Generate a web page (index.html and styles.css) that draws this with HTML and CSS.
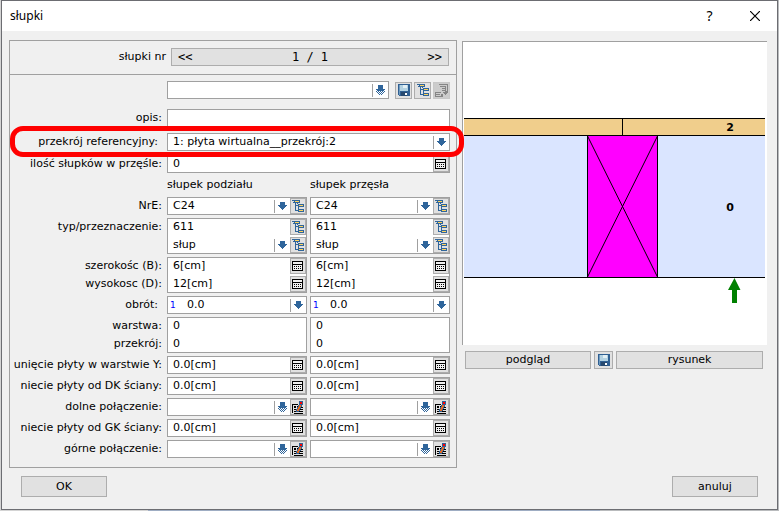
FILE: index.html
```html
<!DOCTYPE html>
<html lang="pl">
<head>
<meta charset="utf-8">
<title>słupki</title>
<link rel="stylesheet" href="styles.css">
</head>
<body>
<svg class="sprite" aria-hidden="true">
  <symbol id="arrow" viewBox="0 0 9 8"><path d="M2 0h5v3h2v1h-1v1h-1v1h-1v1h-1v1h-1v-1h-1v-1h-1v-1h-1v-1h-1v-1h2z" fill="#2f659b"/></symbol>
  <symbol id="arrow-dots" viewBox="0 0 9 10"><path d="M2 0h5v4h2v1H0V4h2zM1 5h1v1H1zM3 5h1v1H3zM5 5h1v1H5zM7 5h1v1H7zM2 5h5v1H2zM2 6h1v1H2zM4 6h1v1H4zM6 6h1v1H6zM0 6h1v1H0zM8 6h1v1H8zM3 7h1v1H3zM5 7h1v1H5zM1 7h1v1H1zM7 7h1v1H7zM4 8h1v1H4zM2 8h1v1H2zM6 8h1v1H6zM3 9h1v1H3zM5 9h1v1H5z" fill="#2f659b"/></symbol>
  <symbol id="calc" viewBox="0 0 12 12"><path d="M0 1h11v10H0z"/><path d="M1 2h9v2H1zM1 5h9v5H1z" fill="#f0f0f0"/><path d="M2 6h1v1H2zM4 6h1v1H4zM6 6h1v1H6zM8 6h1v1H8zM2 8h1v1H2zM4 8h1v1H4zM6 8h1v1H6zM8 8h1v1H8z"/></symbol>
  <symbol id="tree" viewBox="0 0 12 12"><path d="M0 0h8v3H6v1h6v3H7v2h5v3H6v-1H3V3H0zM4 3v2h2V4H5V3zM4 6v4h2V6z" fill="#2f659b" fill-rule="evenodd"/><path d="M3 1h4v1H3zM7 5h4v1H7zM7 10h4v1H7z" fill="#ffd35a"/><path d="M0 1h1v2H0zM1 1h1v1H1z" fill="#e1e1e1"/></symbol>
  <symbol id="tree-off" viewBox="0 0 14 14"><path d="M4 1h9v9h-1v1h-1v1h-1v-1H9v-1H8V9h2V6H7V5h3V4H5V3h6v5h1V2H4zM0 9h6v1H1v1h4v1H1v1h5v-2h2v3H0zM7 7h3v1H7z" fill="#858585" fill-rule="evenodd"/></symbol>
  <symbol id="disk" viewBox="0 0 12 12"><path d="M0 0h12v12H1L0 11z" fill="#2f5f92"/><path d="M2 1h8v6H2z" fill="#b3d2e2"/><path d="M5 1h4v3H5z" fill="#e3f0f5"/><path d="M1 1h1v10H1z" fill="#6f9bc0"/><path d="M3 8h6v4H3z" fill="#26486e"/><path d="M7 9h2v2H7z" fill="#fff"/></symbol>
  <symbol id="edit" viewBox="0 0 12 13"><path d="M0 3h6v1H1v8H0zM2 5h2v2H2zM5 5h1v1H5zM2 8h3v1H2zM2 10h2v1H2zM7 10h4v1H7zM8 8h3v1H8zM9 6h2v1H9zM2 12h9v1H2z"/><path d="M7 0h4v4h-1v2H9v2H8v2H7v1H4V8h1V6h1V4h1z" fill="#2f5f92"/><path d="M7 4h2v2H8v2H7v2H5V8h1V6h1z" fill="#e66a20"/><path d="M8 1h2v2H8z" fill="#f00"/></symbol>
</svg>
<div class="dialog">
  <header class="titlebar">
    <h1>słupki</h1>
    <button class="title-btn" aria-label="Pomoc">?</button>
    <button class="title-btn" aria-label="Zamknij"><svg width="10" height="10" viewBox="0 0 10 10"><path d="M0 0L10 10M10 0L0 10" stroke="#000" stroke-width="1.2"/></svg></button>
  </header>
  <main>
    <section class="panel">
      <div class="nav-row">
        <span class="nav-label">słupki nr</span>
        <div class="nav"><button>&lt;&lt;</button><span>1 / 1</span><button>&gt;&gt;</button></div>
      </div>
      <form class="form" id="posts">
        <div class="presets wide">
          <div class="box"><div class="line"><select aria-label="szablon"><option></option></select><span class="drop"><svg width="9" height="10"><use href="#arrow-dots"/></svg></span></div></div>
          <button type="button" class="tool" aria-label="zapisz"><svg width="12" height="12"><use href="#disk"/></svg></button>
          <button type="button" class="tool" aria-label="drzewo"><svg width="12" height="12"><use href="#tree"/></svg></button>
          <button type="button" class="tool" aria-label="wstaw" disabled><svg width="14" height="14"><use href="#tree-off"/></svg></button>
        </div>

        <label class="label" for="opis">opis:</label>
        <div class="box wide opis"><div class="line"><input id="opis"></div></div>

        <div class="marked">
          <label class="label inset" for="ref">przekrój referencyjny:</label>
          <div class="box wide"><div class="line"><select id="ref"><option>1: płyta wirtualna__przekrój:2</option></select><span class="drop"><svg width="9" height="8"><use href="#arrow"/></svg></span></div></div>
          <span class="ring"></span>
        </div>

        <label class="label" for="ilosc">ilość słupków w przęśle:</label>
        <div class="box wide"><div class="line"><input id="ilosc" value="0"><button type="button" aria-label="kalkulator"><svg width="12" height="12"><use href="#calc"/></svg></button></div></div>

        <span class="head first">słupek podziału</span>
        <span class="head">słupek przęsła</span>

        <label class="label" for="nre">NrE:</label>
        <div class="box"><div class="line"><select id="nre"><option>C24</option></select><span class="drop"><svg width="9" height="8"><use href="#arrow"/></svg></span><button type="button" aria-label="drzewo"><svg width="12" height="12"><use href="#tree"/></svg></button></div></div>
        <div class="box"><div class="line"><select aria-label="NrE, przęsło"><option>C24</option></select><span class="drop"><svg width="9" height="8"><use href="#arrow"/></svg></span><button type="button" aria-label="drzewo"><svg width="12" height="12"><use href="#tree"/></svg></button></div></div>

        <label class="label" for="typ">typ/przeznaczenie:</label>
        <div class="box">
          <div class="line"><input id="typ" value="611"><button type="button" aria-label="drzewo"><svg width="12" height="12"><use href="#tree"/></svg></button></div>
          <div class="line"><select aria-label="przeznaczenie"><option>słup</option></select><span class="drop"><svg width="9" height="8"><use href="#arrow"/></svg></span><button type="button" aria-label="drzewo"><svg width="12" height="12"><use href="#tree"/></svg></button></div>
        </div>
        <div class="box">
          <div class="line"><input aria-label="typ, przęsło" value="611"><button type="button" aria-label="drzewo"><svg width="12" height="12"><use href="#tree"/></svg></button></div>
          <div class="line"><select aria-label="przeznaczenie, przęsło"><option>słup</option></select><span class="drop"><svg width="9" height="8"><use href="#arrow"/></svg></span><button type="button" aria-label="drzewo"><svg width="12" height="12"><use href="#tree"/></svg></button></div>
        </div>

        <div class="labels"><label class="label" for="szer">szerokośc (B):</label><label class="label" for="wys">wysokosc (D):</label></div>
        <div class="box">
          <div class="line"><input id="szer" value="6[cm]"><button type="button" aria-label="kalkulator"><svg width="12" height="12"><use href="#calc"/></svg></button></div>
          <div class="line"><input id="wys" value="12[cm]"><button type="button" aria-label="kalkulator"><svg width="12" height="12"><use href="#calc"/></svg></button></div>
        </div>
        <div class="box">
          <div class="line"><input aria-label="szerokość, przęsło" value="6[cm]"><button type="button" aria-label="kalkulator"><svg width="12" height="12"><use href="#calc"/></svg></button></div>
          <div class="line"><input aria-label="wysokość, przęsło" value="12[cm]"><button type="button" aria-label="kalkulator"><svg width="12" height="12"><use href="#calc"/></svg></button></div>
        </div>

        <label class="label inset" for="obrot">obrót:</label>
        <div class="box"><div class="line"><span class="index">1</span><select id="obrot"><option>0.0</option></select><span class="drop"><svg width="9" height="8"><use href="#arrow"/></svg></span></div></div>
        <div class="box"><div class="line"><span class="index">1</span><select aria-label="obrót, przęsło"><option>0.0</option></select><span class="drop"><svg width="9" height="8"><use href="#arrow"/></svg></span></div></div>

        <div class="labels"><label class="label" for="warstwa">warstwa:</label><label class="label" for="przekroj">przekrój:</label></div>
        <div class="box"><div class="line"><input id="warstwa" value="0"></div><div class="line"><input id="przekroj" value="0"></div></div>
        <div class="box"><div class="line"><input aria-label="warstwa, przęsło" value="0"></div><div class="line"><input aria-label="przekrój, przęsło" value="0"></div></div>

        <label class="label" for="py">unięcie płyty w warstwie Y:</label>
        <div class="box"><div class="line"><input id="py" value="0.0[cm]"><button type="button" aria-label="kalkulator"><svg width="12" height="12"><use href="#calc"/></svg></button></div></div>
        <div class="box"><div class="line"><input aria-label="warstwa Y, przęsło" value="0.0[cm]"><button type="button" aria-label="kalkulator"><svg width="12" height="12"><use href="#calc"/></svg></button></div></div>

        <label class="label" for="dk">niecie płyty od DK ściany:</label>
        <div class="box"><div class="line"><input id="dk" value="0.0[cm]"><button type="button" aria-label="kalkulator"><svg width="12" height="12"><use href="#calc"/></svg></button></div></div>
        <div class="box"><div class="line"><input aria-label="DK ściany, przęsło" value="0.0[cm]"><button type="button" aria-label="kalkulator"><svg width="12" height="12"><use href="#calc"/></svg></button></div></div>

        <label class="label" for="dolne">dolne połączenie:</label>
        <div class="box"><div class="line"><select id="dolne"><option></option></select><span class="drop"><svg width="9" height="10"><use href="#arrow-dots"/></svg></span><button type="button" aria-label="edytuj"><svg width="12" height="13"><use href="#edit"/></svg></button></div></div>
        <div class="box"><div class="line"><select aria-label="dolne połączenie, przęsło"><option></option></select><span class="drop"><svg width="9" height="10"><use href="#arrow-dots"/></svg></span><button type="button" aria-label="edytuj"><svg width="12" height="13"><use href="#edit"/></svg></button></div></div>

        <label class="label" for="gk">niecie płyty od GK ściany:</label>
        <div class="box"><div class="line"><input id="gk" value="0.0[cm]"><button type="button" aria-label="kalkulator"><svg width="12" height="12"><use href="#calc"/></svg></button></div></div>
        <div class="box"><div class="line"><input aria-label="GK ściany, przęsło" value="0.0[cm]"><button type="button" aria-label="kalkulator"><svg width="12" height="12"><use href="#calc"/></svg></button></div></div>

        <label class="label" for="gorne">górne połączenie:</label>
        <div class="box"><div class="line"><select id="gorne"><option></option></select><span class="drop"><svg width="9" height="10"><use href="#arrow-dots"/></svg></span><button type="button" aria-label="edytuj"><svg width="12" height="13"><use href="#edit"/></svg></button></div></div>
        <div class="box"><div class="line"><select aria-label="górne połączenie, przęsło"><option></option></select><span class="drop"><svg width="9" height="10"><use href="#arrow-dots"/></svg></span><button type="button" aria-label="edytuj"><svg width="12" height="13"><use href="#edit"/></svg></button></div></div>
      </form>
    </section>

    <section class="side">
      <div class="canvas">
        <svg viewBox="0 0 304 303" role="img" aria-label="przekrój ściany">
          <g shape-rendering="crispEdges">
            <path d="M1 76h301v17H1z" fill="#f0ce8c"/>
            <path d="M1 94h301v141H1z" fill="#dae5ff"/>
            <path d="M124 94h71v141h-71z" fill="#f0f"/>
            <path d="M1 76h301v1H1zM1 93h301v1H1zM1 235h301v1H1zM159 77h1v16h-1zM124 94h1v141h-1zM194 94h1v141h-1z"/>
          </g>
          <path d="M124.500 94L194.500 235M194.500 94L124.500 235" stroke="#000" fill="none"/>
          <path d="M271.500 236l6 12h-3.500v13h-5v-13h-4z" fill="#008000"/>
          <text x="267" y="89" text-anchor="middle">2</text>
          <text x="267" y="169" text-anchor="middle">0</text>
        </svg>
      </div>
      <div class="side-actions">
        <button class="btn preview">podgląd</button>
        <button class="btn save" aria-label="zapisz rysunek"><svg width="12" height="12"><use href="#disk"/></svg></button>
        <button class="btn draw">rysunek</button>
      </div>
    </section>
  </main>
  <footer>
    <button class="btn">OK</button>
    <button class="btn">anuluj</button>
  </footer>
</div>
</body>
</html>
```
FILE: styles.css
```css
* { box-sizing: border-box; }

body {
  margin: 0;
  min-height: 100vh;
  padding: 0 1px 1px;
  display: flex;
  background: linear-gradient(90deg, #d4d4d4 19%, #9fadc3 19%, #9fadc3 77%, #b9bbbd 77%);
  color: #000;
  font: 11px/16px "DejaVu Sans", Verdana, sans-serif;
}

button, input, select {
  margin: 0;
  padding: 0;
  border: 0;
  border-radius: 0;
  background: none;
  color: inherit;
  font: inherit;
  appearance: none;
}

svg { display: block; flex: none; }
use { shape-rendering: crispEdges; }
.sprite { position: absolute; width: 0; height: 0; }

.dialog {
  flex: 1;
  min-width: 0;
  border: 1px solid #6c6d72;
  background: #f0f0f0;
}

.titlebar {
  display: flex;
  align-items: center;
  height: 30px;
  padding-left: 8px;
  background: #fff;
  font: 12px/16px "Noto Sans", "Segoe UI", sans-serif;
}
.titlebar h1 { flex: 1; margin: 0; font: inherit; }
.title-btn {
  display: flex;
  align-items: center;
  justify-content: center;
  width: 45px;
  height: 30px;
  font-size: 14px;
}

main {
  display: grid;
  grid-template-columns: 448fr 305fr;
  gap: 5px;
  padding: 9px 10px 0 7px;
}

.panel { min-width: 0; border: 1px solid #a0a0a0; }

.nav-row {
  display: grid;
  grid-template-columns: 156px 1fr;
  gap: 5px;
  padding: 7px 7px 8px 0;
  border-bottom: 1px solid #a0a0a0;
}
.nav-label { text-align: right; line-height: 18px; }
.nav {
  display: flex;
  justify-content: space-between;
  padding: 0 6px;
  border: 1px solid #adadad;
  background: #e1e1e1;
  font: 12px/16px "DejaVu Sans Mono", monospace;
}

.form {
  display: grid;
  grid-template-columns: 151px 1fr 1fr;
  gap: 3px;
  padding: 6px 6px 9px 3px;
}
.wide { grid-column: 2 / 4; }

.label {
  display: flex;
  justify-content: flex-end;
  padding-right: 2px;
  overflow: hidden;
  line-height: 18px;
  white-space: nowrap;
}
.inset { padding-right: 6px; }

.head { line-height: 18px; }
.first { grid-column: 2; }

.presets { display: flex; align-items: center; gap: 2px; margin-bottom: 7px; }
.presets .box { flex: 1; margin-right: 4px; }
.tool {
  display: flex;
  align-items: center;
  justify-content: center;
  width: 17px;
  height: 17px;
  border: 1px solid #adadad;
  background: #e1e1e1;
}
.tool:disabled { border-color: #c8c8c8; background: #ccc; }

.opis { margin-bottom: 3px; }

.box {
  display: grid;
  gap: 2px;
  min-width: 0;
  border: 1px solid #a0a0a0;
  background: #fff;
}
.line { display: flex; align-items: center; height: 16px; min-width: 0; }
.line input, .line select {
  flex: 1;
  width: 0;
  min-width: 0;
  height: 16px;
  padding-left: 5px;
}
.line button {
  display: flex;
  align-items: center;
  justify-content: center;
  width: 16px;
  height: 16px;
  border: 1px solid #adadad;
  background: #e1e1e1;
}
.drop {
  display: flex;
  align-items: center;
  justify-content: center;
  width: 16px;
  height: 13px;
  border-left: 1px solid #a0a0a0;
  pointer-events: none;
}
.index { width: 14px; padding-left: 2px; color: #00f; font-size: 9px; }

.marked {
  position: relative;
  display: grid;
  grid-column: 1 / -1;
  grid-template-columns: subgrid;
  margin-bottom: 1px;
}
.ring {
  position: absolute;
  inset: -7px -14px -6px -3px;
  border: 5px solid #f00;
  border-radius: 13px;
  pointer-events: none;
}

.canvas {
  margin-top: 1px;
  border: solid #a0a0a0;
  border-width: 1px 0 0 1px;
  background: #fff;
}
.canvas svg { width: 100%; height: auto; }
.canvas text { font: bold 11px "DejaVu Sans", Verdana, sans-serif; }

.side-actions {
  display: flex;
  gap: 3px;
  padding: 6px 4px 0 3px;
}
.btn {
  display: flex;
  align-items: center;
  justify-content: center;
  border: 1px solid #adadad;
  background: #e1e1e1;
}
.side-actions .btn { height: 18px; }
.preview { flex: 126; }
.save { width: 19px; }
.draw { flex: 147; }

footer {
  display: flex;
  justify-content: space-between;
  padding: 8px 19px 12px;
}
footer .btn { width: 86px; height: 21px; }
```
